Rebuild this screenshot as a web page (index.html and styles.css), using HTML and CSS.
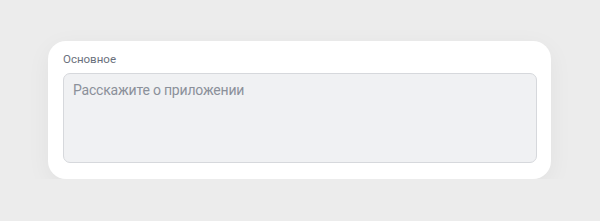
FILE: index.html
```html
<!DOCTYPE html>
<html lang="ru">
<head>
    <meta charset="UTF-8">
    <meta name="viewport" content="width=device-width, initial-scale=1.0">
    <title>Основное</title>
    <link rel="stylesheet" href="styles.css">
</head>
<body>
    <div class="card">
        <label class="field-label" for="about">Основное</label>
        <textarea id="about" class="field-input" placeholder="Расскажите о приложении"></textarea>
    </div>
</body>
</html>
```

FILE: styles.css
```css
body {
    font-family: Roboto, 'Noto Sans', sans-serif;
    background-color: #ececec;
    margin: 0;
    padding: 41px 49px 0 48px;
}
.card {
    background-color: white;
    border-radius: 18px;
    padding: 11px 14px 16px 15px;
    box-shadow: 0 6px 24px rgba(0, 0, 0, 0.05);
}
.field-label {
    display: block;
    font-size: 11.5px;
    line-height: 14px;
    color: #6a707c;
    margin-bottom: 7px;
}
.field-input {
    display: block;
    box-sizing: border-box;
    width: 100%;
    height: 90px;
    margin: 0;
    padding: 6px 9px;
    border: 1px solid #d6d8dc;
    border-radius: 7px;
    background-color: #f0f1f3;
    font-family: inherit;
    font-size: 14px;
    letter-spacing: -0.2px;
    line-height: 20px;
    resize: none;
}
.field-input::placeholder {
    color: #8b909a;
}
```
